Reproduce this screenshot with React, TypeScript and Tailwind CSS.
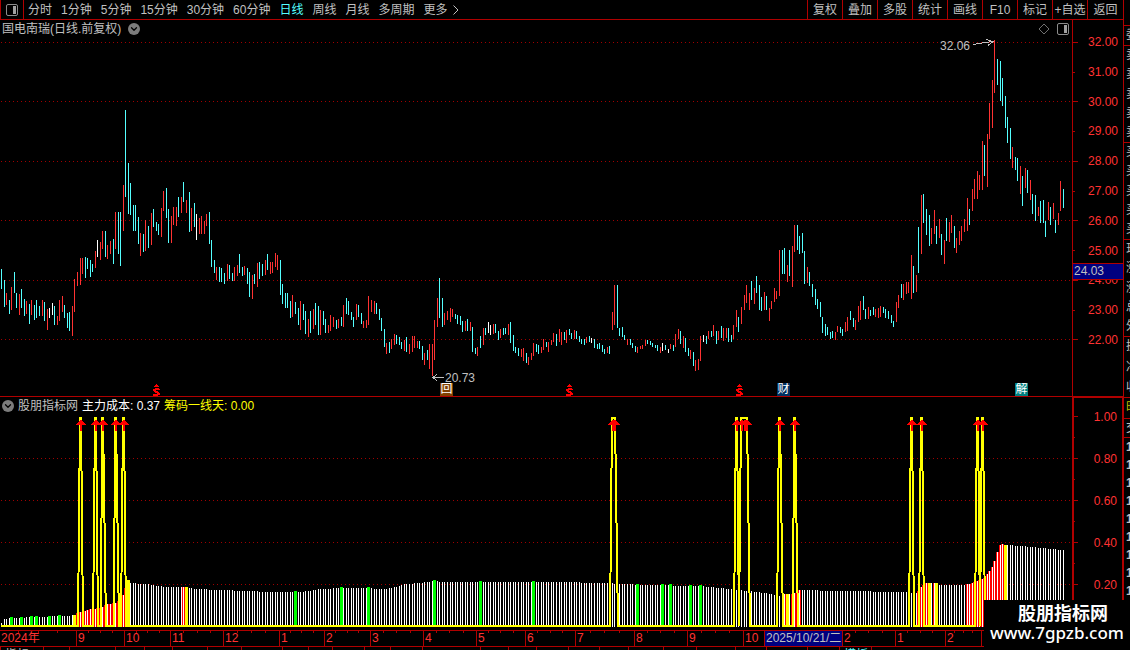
import { ChevronDown } from 'lucide-react';

// x, high, low of every daily bar; the first letter is the colour: r up, c down, w flat
const BARS = `
c1,269,289 c4,280,307 r6,293,305 c9,300,314 r11,287,310 c14,272,293 c16,293,308 r19,294,315 c21,289,308 c24,299,316
r26,301,314 c29,304,324 r31,300,315 c34,305,320 c36,300,318 c39,306,316 r42,300,316 c44,302,321 r47,309,330 w49,308,318
w52,303,315 c54,306,325 r57,316,325 r59,300,321 r62,296,312 c64,305,318 c67,313,328 c69,312,331 r72,306,336 r74,279,312
r77,272,286 r80,258,285 r82,258,274 c85,257,278 c87,258,269 c90,260,277 c92,264,272 r95,251,268 w97,240,257 r100,242,260
r102,231,249 c105,231,257 r107,245,259 r110,241,254 c113,239,264 r115,212,249 c118,212,254 c120,212,266 r123,185,231 c125,110,197
c128,163,214 c130,183,215 c133,205,231 c135,205,231 c138,217,244 r140,233,256 c143,234,252 r145,220,251 c148,226,248 r151,213,245
c153,209,227 c156,222,231 c158,224,235 r161,208,237 r163,191,211 c166,188,218 c168,209,243 r171,216,243 r173,207,225 r176,207,226
c178,197,217 r181,197,213 c183,182,202 r186,200,213 c189,192,232 r191,208,231 c194,203,227 w196,214,240 r199,218,234 r201,216,234
r204,221,234 r206,214,226 c209,212,244 c211,240,267 c214,260,273 r216,267,280 c219,267,282 c221,268,282 c224,273,284 r227,264,281
c229,265,279 c232,273,281 r234,267,281 r237,265,276 c239,254,273 c242,267,276 r244,266,275 c247,268,284 c249,272,297 r252,275,299
c254,274,284 r257,263,287 c259,262,279 c262,264,276 r265,260,275 c267,254,270 r270,262,274 r272,262,273 r275,253,267 r277,255,270
c280,260,295 c282,284,304 c285,293,308 c287,293,308 c290,301,318 r292,295,317 c295,302,314 c298,308,325 r300,301,330 c303,304,320
c305,311,334 r308,319,337 c310,311,333 r313,309,329 c315,303,325 c318,306,335 r320,310,335 c323,311,325 c325,319,333 r328,325,333
r330,315,331 r333,317,327 c336,320,329 r338,319,328 c341,317,326 r343,305,327 c346,298,314 c348,301,315 c351,312,320 c353,317,327
r356,304,320 c358,305,317 c361,313,324 r363,321,328 r366,320,328 r368,296,325 r371,300,312 r374,301,314 c376,303,314 c379,309,320
c381,318,331 c384,329,347 r386,343,354 c389,342,353 r391,339,349 r394,334,345 c396,335,344 c399,337,345 c401,342,349 r404,340,351
c406,337,352 r409,344,354 r412,336,352 r414,336,348 r417,341,348 c419,341,349 c422,346,360 r424,353,365 c427,350,360 r429,344,369
r432,344,376 r434,320,360 r437,298,327 c439,278,318 c442,298,327 r444,313,325 r447,311,320 r450,308,322 r452,309,317 c455,314,319
c457,315,324 c460,316,325 c462,321,332 r465,321,331 c467,319,331 r470,322,331 c472,327,352 c475,348,354 r477,347,356 c480,336,348
r483,328,345 c485,328,335 w488,322,333 w490,325,335 r493,324,334 c495,324,333 c498,331,340 r500,329,338 c503,328,335 c505,328,334
r508,324,335 c510,322,343 c513,335,351 c515,347,353 c518,348,356 r521,349,357 r523,348,361 c526,353,363 r528,357,365 r531,353,360
r533,343,356 c536,344,352 c538,345,354 r541,347,353 r543,339,350 c546,342,347 r548,342,352 r551,340,345 r553,333,342 c556,334,346
r559,329,342 r561,332,345 c564,332,340 r566,330,343 c569,329,335 c571,333,339 r574,330,339 c576,331,339 c579,336,342 c581,339,344
c584,339,345 r586,337,343 c589,336,342 w591,338,343 c594,339,348 c597,344,349 c599,343,349 c602,345,352 c604,349,354 r607,347,353
c609,346,354 r612,312,330 r614,285,325 c617,285,328 c619,328,336 c622,327,337 c624,335,340 r627,339,345 c630,339,345 c632,343,348
c635,346,352 r637,347,353 r640,346,349 r642,345,349 r645,340,346 c647,340,344 c650,341,345 c652,343,347 c655,345,348 c657,345,351
r660,347,353 w662,343,351 c665,345,350 w668,349,353 r670,344,349 c673,345,351 r675,334,347 r678,329,339 c680,331,344 r683,336,348
c685,338,352 c688,348,356 r690,350,359 c693,352,366 r695,360,371 r698,359,370 r700,336,361 w703,335,342 c706,336,344 r708,331,339
c711,331,337 r713,325,336 c716,331,344 r718,331,340 c721,326,338 r723,328,341 r726,328,338 c728,328,342 c731,335,342 r733,325,339
r736,310,327 c738,317,332 r741,307,324 r744,295,310 r746,285,303 r749,293,310 c751,281,300 r754,288,304 c756,276,293 c759,285,310
c761,297,311 r764,292,310 c766,296,310 r769,308,321 r771,301,309 r774,288,302 r776,291,299 r779,250,296 c782,250,274 c784,248,274
r787,265,282 c789,250,276 r792,246,287 r794,225,252 c797,225,250 c799,236,254 c802,233,253 c804,251,284 r807,267,283 c809,272,286
c812,284,297 c815,289,305 c817,299,309 c820,302,317 c822,317,333 c825,324,336 c827,327,335 c830,332,339 c832,331,338 r835,332,340
r837,326,332 c840,327,333 c842,329,336 r845,322,332 r847,317,331 c850,311,320 c853,318,327 r855,320,330 r858,306,322 r860,301,320
c863,296,310 c865,309,319 r868,307,319 c870,310,316 c873,307,315 r875,309,317 r878,308,318 r880,306,317 c883,307,313 c885,309,318
c888,311,319 c891,315,323 c893,321,327 r896,302,322 r898,295,308 c901,284,298 r903,284,300 r906,282,294 r908,282,293 r911,255,299
c913,266,293 r916,275,292 c918,227,273 r921,195,254 c923,194,223 c926,209,235 c929,215,246 r931,228,244 r934,210,234 c936,226,244
r939,219,238 c941,234,255 r944,240,264 c946,218,241 r949,222,242 r951,215,233 c954,226,248 r956,238,253 r959,231,245 r961,226,241
r964,219,232 r967,198,231 c969,209,225 r972,189,211 r974,179,199 r977,171,199 r979,175,190 r982,141,190 c984,145,176 r987,134,187
r989,103,139 r992,80,128 r994,40,93 c997,59,85 c1000,61,101 c1002,78,106 c1005,96,128 c1007,117,143 c1010,128,159 r1012,147,168
c1015,157,170 c1017,158,181 r1020,166,194 c1022,176,206 r1025,168,188 c1027,170,193 r1030,180,200 c1032,194,214 c1035,195,221 r1038,207,216
c1040,201,223 c1043,200,223 c1045,221,237 r1048,202,220 c1050,207,225 r1053,203,219 c1055,220,233 r1058,213,225 r1060,181,211 c1063,189,208
`
  .trim()
  .split(/\s+/)
  .map((s) => {
    const [x, high, low] = s.slice(1).split(',').map(Number);
    return { tone: s[0], x, high, low };
  });

const TONES: Record<string, string> = { r: '#ff3232', c: '#54ffff', w: '#ffffff' };

// top of the 主力成本 columns at some x, the rest is interpolated
const COST: [number, number][] = [
  [1, 623], [4, 619], [11, 618], [64, 616], [75, 615], [77, 613], [85, 611], [90, 609], [100, 608], [107, 604],
  [115, 603], [120, 600], [123, 595], [127, 580], [130, 583], [145, 584], [165, 587], [185, 587], [195, 589], [220, 590],
  [270, 592], [300, 592], [320, 589], [345, 588], [362, 588], [385, 589], [395, 587], [405, 584], [420, 583], [433, 581],
  [445, 582], [560, 582], [600, 583], [625, 584], [640, 585], [700, 586], [720, 588], [735, 590], [750, 591], [770, 594],
  [780, 596], [784, 594], [793, 594], [796, 590], [840, 591], [905, 592], [916, 593], [920, 588], [925, 583], [935, 583],
  [938, 585], [965, 585], [975, 582], [980, 580], [985, 577], [989, 571], [992, 567], [994, 561], [997, 552], [999, 546],
  [1001, 544], [1007, 545], [1020, 546], [1063, 550],
];

const costTop = (x: number) => {
  const i = Math.max(1, COST.findIndex(([px]) => px >= x));
  const [x0, y0] = COST[i - 1];
  const [x1, y1] = COST[i];
  return Math.round(y0 + ((y1 - y0) * (x - x0)) / (x1 - x0));
};

const RISING = [[77, 126], [182, 186], [783, 786], [791, 800], [918, 928], [932, 935], [965, 1003]];
const GREEN = [10, 20, 30, 35, 48, 58, 294, 340, 367, 433, 479, 532, 636, 661, 669, 689, 699];
const YELLOW = [73, 127, 185, 786, 928, 935, 1004];

// base left, first peak, last peak, base right
const SPIKES = [
  [77, 80, 80, 82], [92, 95, 95, 97], [100, 102, 102, 105], [113, 115, 115, 118], [120, 123, 123, 125],
  [609, 612, 614, 617], [733, 736, 736, 738], [738, 741, 746, 749], [776, 779, 779, 782], [792, 794, 794, 797],
  [908, 911, 911, 913], [918, 921, 921, 923], [974, 977, 977, 979], [979, 982, 982, 984],
];
const SIGNALS = [80, 95, 102, 115, 123, 612, 614, 736, 741, 744, 746, 779, 794, 911, 921, 977, 982];

const spikePath =
  'M1 626' + SPIKES.map(([a, b, c, d]) => `H${a + 1}L${b} 418H${c + 1}L${d + 1} 626`).join('') + 'H1064';

const PERIODS = ['分时', '1分钟', '5分钟', '15分钟', '30分钟', '60分钟', '日线', '周线', '月线', '多周期', '更多'];
const TOOLS = ['复权', '叠加', '多股', '统计', '画线', 'F10', '标记', '+自选'];
const PRICES = ['32.00', '31.00', '30.00', '29.00', '28.00', '27.00', '26.00', '25.00', '24.00', '23.00', '22.00'];
const MONTHS: [string, number, number][] = [
  ['2024年', 0, 76], ['9', 76, 124], ['10', 124, 170], ['11', 170, 223], ['12', 223, 279], ['1', 279, 324],
  ['2', 324, 370], ['3', 370, 423], ['4', 423, 476], ['5', 476, 525], ['6', 525, 575], ['7', 575, 634],
  ['8', 634, 687], ['9', 687, 743], ['10', 743, 764], ['2025/10/21/二', 764, 842], ['2', 842, 895], ['1', 895, 945],
  ['2', 945, 981], ['', 981, 1072],
];
const FOOTER = [0, 43, 69, 115, 144, 172, 207, 241, 282, 308, 332, 364, 390, 422, 480, 508, 536, 568, 599, 628, 663, 696, 735, 766, 807, 839, 871, 1072];

const percent = (n: number) => `${(n / 1072) * 100}%`;

const Grid = ({ rows }: { rows: number[] }) => (
  <g stroke="#a00000" strokeDasharray="1 3">
    {rows.map((y) => (
      <path key={y} d={`M1 ${y + 0.5}H1071`} />
    ))}
  </g>
);

const PanelIcon = () => (
  <svg viewBox="0 0 12 12" className="h-3 w-3" aria-hidden="true">
    <rect x="0.5" y="0.5" width="11" height="11" rx="1.5" fill="none" stroke="#8c8c8c" />
    <rect x="7" y="2" width="3" height="8" fill="#a0a0a0" />
  </svg>
);

const FoldButton = ({ label }: { label: string }) => (
  <button aria-label={label} className="flex h-3 w-3 shrink-0 items-center justify-center rounded-full bg-[#7c7c7c] text-black">
    <ChevronDown className="h-2.5 w-2.5" strokeWidth={3} />
  </button>
);

const Dividend = ({ x }: { x: number }) => (
  <g transform={`translate(${x - 3} 384)`} fill="#ff0000">
    <path d="M3 0H4V1H5V2H6V3H1V2H2V1H3Z" />
    <path d="M2 4H6V5H7V6H3V7H5V8H6V9H7V11H5V12H0V10H4V9H2V8H1V7H0V5H2Z" />
  </g>
);

const PriceChart = () => (
  <svg viewBox="0 38 1072 358" preserveAspectRatio="none" shapeRendering="crispEdges" className="block h-[358px] w-full" aria-label="日线">
    <Grid rows={[42, 101, 161, 220, 280, 339]} />
    {BARS.map((b) => (
      <rect key={b.x} x={b.x} y={b.high} width="1" height={b.low - b.high} fill={TONES[b.tone]} />
    ))}
    <g stroke="#c0c0c0" fill="none">
      <path d="M973 44.5L992 41.5M986 39.5L993 41.5L988 45.5" />
      <path d="M444 377.5H432M437 374.5L433 377.5L437 380.5" />
    </g>
    {[156, 569, 739].map((x) => (
      <Dividend key={x} x={x} />
    ))}
  </svg>
);

const CostChart = () => (
  <svg viewBox="0 414 1072 216" preserveAspectRatio="none" shapeRendering="crispEdges" className="block h-[216px] w-full" aria-label="主力成本">
    <Grid rows={[458, 500, 542, 584]} />
    {BARS.filter((b) => RISING.some(([a, z]) => b.x >= a && b.x <= z)).map((b) => (
      <rect key={b.x} x={b.x - 1} y={costTop(b.x)} width="3" height={627 - costTop(b.x)} fill="#ff0000" />
    ))}
    {BARS.map((b) => (
      <rect key={b.x} x={b.x} y={costTop(b.x)} width="1" height={627 - costTop(b.x)} fill="#ffffff" />
    ))}
    {GREEN.map((x) => (
      <rect key={x} x={x} y={costTop(x) - 1} width="3" height={627 - costTop(x)} fill="#00ff00" />
    ))}
    {YELLOW.map((x) => (
      <rect key={x} x={x} y={costTop(x)} width="3" height={626 - costTop(x)} fill="#ffff00" />
    ))}
    <path d={spikePath} fill="none" stroke="#ffff00" strokeWidth="2" />
    {SIGNALS.map((x) => (
      <path key={x} d={`M${x + 1} 419L${x + 6} 425H${x + 2}V431H${x}V425H${x - 4}Z`} fill="#ff0000" />
    ))}
  </svg>
);

const Marker = ({ x, className, children }: { x: number; className: string; children: string }) => (
  <span style={{ left: percent(x) }} className={`absolute bottom-0 h-[13px] w-[13px] overflow-hidden text-center leading-[13px] text-white ${className}`}>
    {children}
  </span>
);

const Toolbar = () => (
  <header className="flex h-5 border-b border-[#b00000]">
    <button aria-label="侧栏" className="flex w-6 shrink-0 items-center justify-center border-x border-[#b00000]">
      <PanelIcon />
    </button>
    <nav className="flex flex-1 items-center gap-[9px] overflow-hidden pl-1 whitespace-nowrap">
      {PERIODS.map((p) => (
        <button key={p} className={p === '日线' ? 'text-[#54ffff]' : ''}>
          {p}
        </button>
      ))}
      <svg viewBox="0 0 6 10" className="-ml-1 h-2.5 w-1.5" fill="none" stroke="#c0c0c0" aria-hidden="true">
        <path d="M0.5 0.5L5 5L0.5 9.5" />
      </svg>
    </nav>
    <div className="flex shrink-0">
      {TOOLS.map((t) => (
        <button key={t} className="w-[35px] border-l border-[#b00000] text-center whitespace-nowrap">
          {t}
        </button>
      ))}
      <button className="w-[36px] border-l border-[#b00000] text-center">返回</button>
    </div>
  </header>
);

const PriceAxis = () => (
  <aside className="relative w-[51px] shrink-0 border-l border-[#b00000] text-[#ff3232]">
    <svg viewBox="0 20 6 376" className="absolute top-0 left-0 h-[376px] w-1.5" shapeRendering="crispEdges" stroke="#b00000" aria-hidden="true">
      {[42, 101, 161, 220, 280, 339].map((y) => (
        <path key={y} d={`M0 ${y + 0.5}H5`} />
      ))}
      {[72, 131, 191, 250, 310].map((y) => (
        <path key={y} d={`M0 ${y + 0.5}H2`} />
      ))}
    </svg>
    <ul className="flex h-[328px] flex-col justify-between pt-[14px] pr-[5px] text-right leading-4">
      {PRICES.map((p) => (
        <li key={p} className="h-4">
          {p}
        </li>
      ))}
    </ul>
    <div className="absolute inset-x-0 top-[243px] h-[17px] border-y border-[#b00000] bg-[#000080] pl-px leading-[15px] text-[#c0c0c0]">24.03</div>
  </aside>
);

const CostAxis = () => (
  <aside className="relative w-[51px] shrink-0 border-t border-r border-l-2 border-[#b00000] text-[#ff3232]">
    <svg viewBox="0 398 6 232" className="absolute top-0 left-0 h-[232px] w-1.5" shapeRendering="crispEdges" stroke="#b00000" aria-hidden="true">
      {[416, 458, 500, 542, 584].map((y) => (
        <path key={y} d={`M0 ${y + 0.5}H4`} />
      ))}
      {[437, 479, 521, 563].map((y) => (
        <path key={y} d={`M0 ${y + 0.5}H1`} />
      ))}
    </svg>
    <ul className="flex h-[195px] flex-col justify-between pt-[11px] pr-[5px] text-right leading-4">
      {['1.00', '0.80', '0.60', '0.40', '0.20'].map((v) => (
        <li key={v} className="h-4">
          {v}
        </li>
      ))}
    </ul>
  </aside>
);

const DateAxis = () => (
  <div className="flex h-[17px] border-y border-[#b00000] pr-[51px] leading-[15px] text-[#ff3232]">
    {MONTHS.map(([label, from, to], idx) => {
      const picked = label.includes('/');
      return (
        <div
          key={from}
          style={{ width: percent(to - from) }}
          className={`relative shrink-0 overflow-hidden pl-px whitespace-nowrap ${idx ? 'border-l border-[#b00000]' : ''} ${picked ? 'bg-[#000080] text-[#c0c0c0]' : ''}`}
        >
          {!picked && to - from > 30 && (
            <span className="absolute inset-x-0 top-0 flex h-0.5 justify-evenly">
              <i className="w-px bg-[#b00000]" />
              <i className="w-px bg-[#b00000]" />
              <i className="w-px bg-[#b00000]" />
            </span>
          )}
          {label}
        </div>
      );
    })}
  </div>
);

const FooterTabs = () => (
  <div className="flex h-[3px] overflow-hidden pr-[51px] leading-4">
    {FOOTER.slice(0, -1).map((x, i) => (
      <div key={x} style={{ width: percent(FOOTER[i + 1] - x) }} className="shrink-0 overflow-hidden border-l border-[#b00000] pl-1 whitespace-nowrap">
        {i === 0 && '指标'}
        {x === 839 && <span className="text-[#54ffff]">模板</span>}
      </div>
    ))}
  </div>
);

const QuoteStrip = () => (
  <aside className="w-[7px] shrink-0 overflow-hidden border-l border-[#b00000] leading-[19px] whitespace-nowrap">
    <div className="h-[25px]" />
    <p className="h-5 border-t border-[#b00000] pl-0.5">委比</p>
    {['卖卖卖卖卖', '买买买买买', '现涨涨总外'].map((group) => (
      <div key={group} className="flex h-[97px] flex-col justify-between border-t border-[#b00000] pl-0.5">
        {group.split('').map((c, i) => (
          <span key={i}>{c}</span>
        ))}
      </div>
    ))}
    <div className="flex h-[61px] flex-col justify-between border-t border-[#b00000] pl-0.5">
      <span>换</span>
      <span>净</span>
      <span>收</span>
    </div>
    <p className="h-[21px] border-t border-[#b00000] pl-0.5 text-[#c0c000]">时</p>
    <p className="h-[19px] border-t border-[#b00000] pl-0.5">交</p>
    <ol className="border-t border-[#b00000] pl-0.5 leading-[18px] font-bold">
      {Array.from({ length: 9 }, (_, i) => (
        <li key={i}>14</li>
      ))}
    </ol>
  </aside>
);

export default function App() {
  return (
    <div className="relative flex min-h-screen overflow-hidden bg-black font-['Liberation_Sans','Noto_Sans_CJK_SC',sans-serif] text-[12px] leading-4 text-[#c0c0c0]">
      <main className="min-w-0 flex-1">
        <Toolbar />

        <section className="flex border-b border-[#b00000]">
          <div className="relative min-w-0 flex-1">
            <div className="flex h-[18px] items-center gap-[7px] pl-0.5">
              <h1>国电南瑞(日线.前复权)</h1>
              <FoldButton label="展开主图" />
              <div className="ml-auto flex items-center gap-[7px] pr-[3px]">
                <svg viewBox="0 0 12 12" className="h-3 w-3" fill="none" stroke="#707070" aria-hidden="true">
                  <path d="M6 1L11 6L6 11L1 6Z" />
                </svg>
                <PanelIcon />
              </div>
            </div>
            <PriceChart />
            <span style={{ left: percent(940) }} className="absolute top-[18px]">32.06</span>
            <span style={{ left: percent(445) }} className="absolute top-[352px] leading-3">20.73</span>
            <Marker x={440} className="bg-[#804000]">回</Marker>
            <Marker x={777} className="bg-[#003060]">财</Marker>
            <Marker x={1015} className="bg-[#008080]">解</Marker>
          </div>
          <PriceAxis />
        </section>

        <section className="flex">
          <div className="min-w-0 flex-1">
            <div className="flex h-[17px] items-center gap-1 pl-0.5 whitespace-nowrap">
              <FoldButton label="展开副图" />
              <h2>股朋指标网</h2>
              <span className="text-white">主力成本: 0.37</span>
              <span className="text-[#ffff00]">筹码一线天: 0.00</span>
            </div>
            <CostChart />
          </div>
          <CostAxis />
        </section>

        <DateAxis />
        <FooterTabs />
      </main>

      <QuoteStrip />

      <div className="absolute right-0 bottom-0 h-[50px] w-[146px] bg-black text-center text-white">
        <p className="pt-px pl-3 text-[18px] leading-[26px] font-bold">股朋指标网</p>
        <p className="font-['Noto_Sans',sans-serif] text-[17px] leading-3 font-medium">www.7gpzb.com</p>
      </div>
    </div>
  );
}
